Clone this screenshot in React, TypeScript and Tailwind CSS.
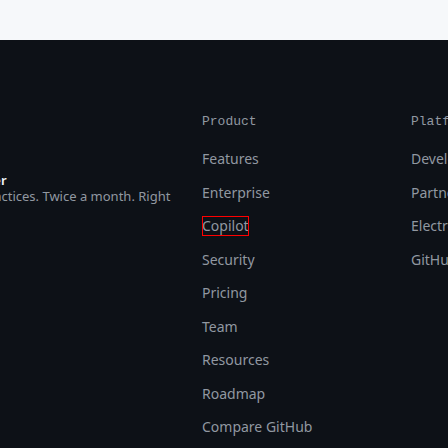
import React from "react";

const product = ["Features", "Enterprise", "Copilot", "Security", "Pricing", "Team", "Resources", "Roadmap", "Compare GitHub"];
const platform = ["Developer API", "Partners", "Electron", "GitHub Desktop"];

function Column({ title, items }: { title: string; items: string[] }) {
  return (
    <div className="w-[209px] shrink-0">
      <h2
        className="text-[13px] leading-5 text-[#9198a1] mb-4 whitespace-nowrap"
        style={{ fontFamily: '"Liberation Mono", "DejaVu Sans Mono", monospace' }}
      >
        {title}
      </h2>
      <ul className="flex flex-col gap-[13.5px]">
        {items.map((it) => (
          <li key={it} className="leading-5 h-5">
            <a
              className={
                "inline-block text-sm leading-5 text-[#9198a1] whitespace-nowrap " +
                (it === "Copilot" ? "outline outline-1 outline-[#ff0000] outline-offset-[-1px]" : "")
              }
            >
              {it}
            </a>
          </li>
        ))}
      </ul>
    </div>
  );
}

export default function App() {
  return (
    <div
      className="w-[448px] h-[448px] overflow-hidden bg-[#0d1117]"
      style={{ fontFamily: '"Noto Sans", sans-serif' }}
    >
      <div className="h-10 bg-[#f6f8fa]" />
      <div className="flex pt-[72px]">
        <div className="ml-[-235px] w-[412px] shrink-0 mr-[25px] pt-[60px]">
          <h2 className="text-[13px] leading-4 font-semibold text-[#f0f6fc] whitespace-nowrap">
            Subscribe to our developer newsletter
          </h2>
          <p className="text-[13px] leading-4 text-[#9198a1]">
            Get tips, technical guides, and best practices. Twice a month. Right in your inbox.
          </p>
        </div>
        <Column title="Product" items={product} />
        <Column title="Platform" items={platform} />
      </div>
    </div>
  );
}
